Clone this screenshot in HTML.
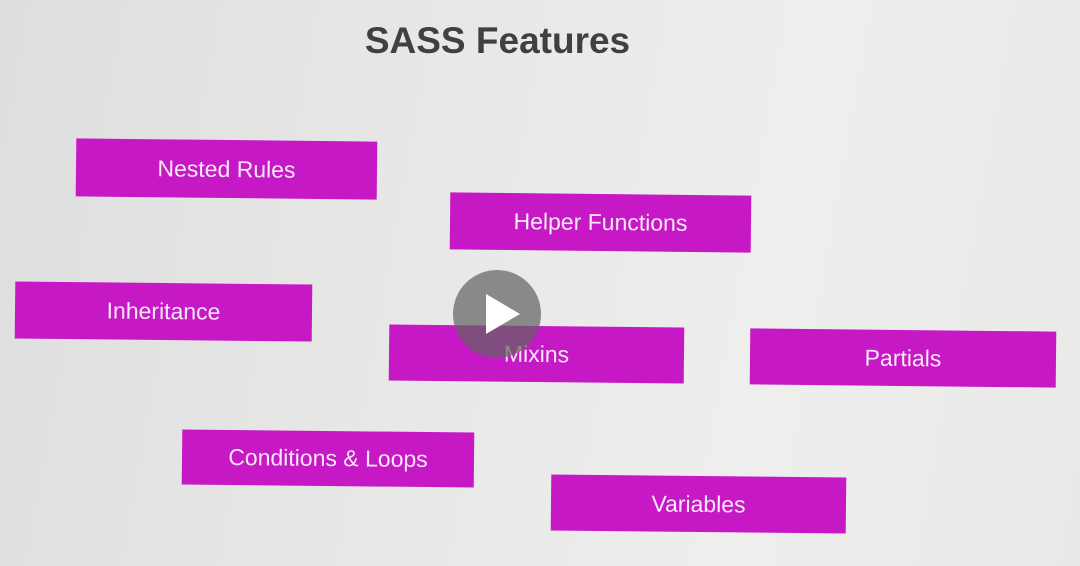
<!DOCTYPE html>
<html><head><meta charset="utf-8"><style>
html,body{margin:0;padding:0}
body{width:1080px;height:566px;overflow:hidden;position:relative;font-family:"Liberation Sans",sans-serif;
background:linear-gradient(100deg,#dedede 0%,#e8e8e7 40%,#eeeeed 70%,#e9e9e8 100%);}
.t{position:absolute;left:0;width:995px;text-align:center;top:20px;font-size:37px;font-weight:bold;color:#404042;}
.b{position:absolute;background:#c718c6;color:#f6e8f6;font-size:23px;display:flex;align-items:center;justify-content:center;transform:rotate(0.6deg);}
.play{position:absolute;left:453px;top:270px;width:88px;height:88px;border-radius:50%;background:rgba(100,100,100,0.72);}
.play:after{content:"";position:absolute;left:33px;top:24px;border-left:34px solid #fff;border-top:20px solid transparent;border-bottom:20px solid transparent;}
</style></head><body>
<div class="t">SASS Features</div>
<div class="b" style="left:76px;top:140px;width:301px;height:58px">Nested Rules</div>
<div class="b" style="left:450px;top:194px;width:301px;height:57px">Helper Functions</div>
<div class="b" style="left:15px;top:283px;width:297px;height:57px">Inheritance</div>
<div class="b" style="left:389px;top:326px;width:295px;height:56px">Mixins</div>
<div class="b" style="left:750px;top:330px;width:306px;height:56px">Partials</div>
<div class="b" style="left:182px;top:431px;width:292px;height:55px">Conditions &amp; Loops</div>
<div class="b" style="left:551px;top:476px;width:295px;height:56px">Variables</div>
<div class="play"></div>
</body></html>
